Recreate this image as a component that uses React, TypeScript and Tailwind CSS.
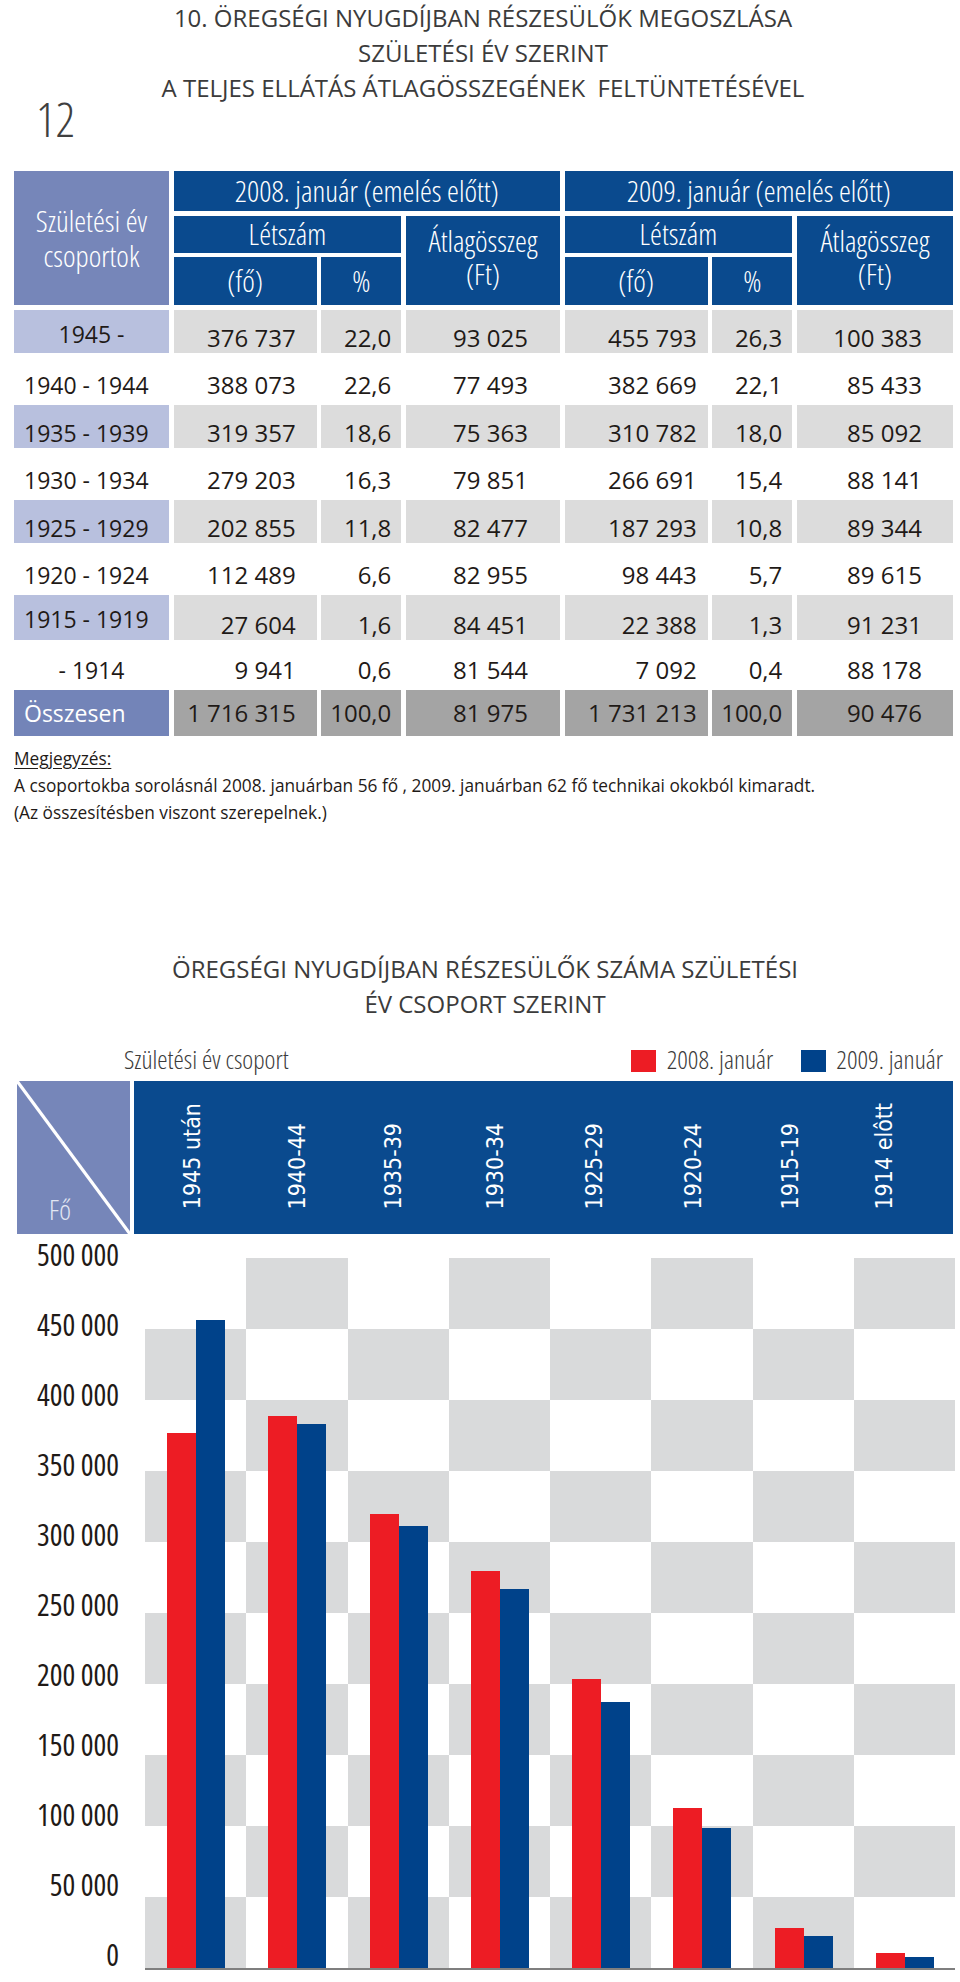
const sans = "font-['Open_Sans',sans-serif]";
const cond = "font-['Open_Sans',sans-serif] font-[350] [font-stretch:condensed]";
const condNormal = "font-['Open_Sans',sans-serif] font-normal [font-stretch:condensed]";

type Row = {
  label: string;
  v: string[];
  shade?: boolean;
  center?: boolean;
  pb?: string;
};

const rows: Row[] = [
  { label: "1945 -", center: true, shade: true, pb: "pb-[4px]", v: ["376 737", "22,0", "93 025", "455 793", "26,3", "100 383"] },
  { label: "1940 - 1944", v: ["388 073", "22,6", "77 493", "382 669", "22,1", "85 433"] },
  { label: "1935 - 1939", shade: true, v: ["319 357", "18,6", "75 363", "310 782", "18,0", "85 092"] },
  { label: "1930 - 1934", v: ["279 203", "16,3", "79 851", "266 691", "15,4", "88 141"] },
  { label: "1925 - 1929", shade: true, v: ["202 855", "11,8", "82 477", "187 293", "10,8", "89 344"] },
  { label: "1920 - 1924", v: ["112 489", "6,6", "82 955", "98 443", "5,7", "89 615"] },
  { label: "1915 - 1919", shade: true, pb: "pb-[6px]", v: ["27 604", "1,6", "84 451", "22 388", "1,3", "91 231"] },
  { label: "- 1914", center: true, v: ["9 941", "0,6", "81 544", "7 092", "0,4", "88 178"] },
];

const total = ["1 716 315", "100,0", "81 975", "1 731 213", "100,0", "90 476"];
const padR = ["pr-[21px]", "pr-[10px]", "pr-[32px]", "pr-[11px]", "pr-[10px]", "pr-[31px]"];

const groups = ["1945 után", "1940-44", "1935-39", "1930-34", "1925-29", "1920-24", "1915-19", "1914 elôtt"];
const y2008 = [376737, 388073, 319357, 279203, 202855, 112489, 27604, 9941];
const y2009 = [455793, 382669, 310782, 266691, 187293, 98443, 22388, 7092];
const ticks = ["500 000", "450 000", "400 000", "350 000", "300 000", "250 000", "200 000", "150 000", "100 000", "50 000", "0"];

const head = `flex items-center justify-center bg-[#0a4a8e] text-[30px] leading-[36px] text-white ${cond}`;

function Table() {
  return (
    <div className="grid grid-cols-[155px_143px_80px_154px_143px_80px_156px] grid-rows-[40px_37px_48px_43px_43px_43px_43px_43px_43px_45px_41px_46px] gap-x-[4.67px] gap-y-[4.5px] pl-[14px] text-[#1f1a17]">
      <div className={`col-start-1 row-start-1 row-span-3 flex flex-col items-center justify-center bg-[#7686b9] text-[30px] text-white ${cond}`}>
        <span className="h-[35px] leading-[35px]">Születési év</span>
        <span className="h-[35px] leading-[35px]">csoportok</span>
      </div>
      {[0, 1].map(g => (
        <div key={g} className="contents">
          <div className={`${g ? "col-start-5" : "col-start-2"} col-span-3 row-start-1 ${head}`}>{g ? "2009" : "2008"}. január (emelés előtt)</div>
          <div className={`${g ? "col-start-5" : "col-start-2"} col-span-2 row-start-2 ${head}`}>Létszám</div>
          <div className={`${g ? "col-start-7" : "col-start-4"} row-start-2 row-span-2 flex-col pb-[7px] ${head}`}>
            <span className="h-[33px] leading-[33px]">Átlagösszeg</span>
            <span className="h-[33px] leading-[33px]">(Ft)</span>
          </div>
          <div className={`${g ? "col-start-5" : "col-start-2"} row-start-3 ${head}`}>(fő)</div>
          <div className={`${g ? "col-start-6" : "col-start-3"} row-start-3 ${head}`}>%</div>
        </div>
      ))}
      {rows.map(r => (
        <div key={r.label} className="contents">
          <div className={`flex items-end text-[23px] leading-[30px] ${sans} ${r.pb ?? ""} ${r.center ? "justify-center" : "pl-[10px]"} ${r.shade ? "bg-[#b8c0de]" : ""}`}>{r.label}</div>
          {r.v.map((v, i) => (
            <div key={i} className={`flex items-end justify-end text-[24px] leading-[30px] ${sans} ${padR[i]} ${r.shade ? "bg-[#dcdcdc]" : ""}`}>{v}</div>
          ))}
        </div>
      ))}
      <div className={`flex items-center bg-[#7384b8] pl-[10px] text-[23px] leading-[30px] text-white ${sans}`}>Összesen</div>
      {total.map((v, i) => (
        <div key={i} className={`flex items-center justify-end bg-[#a4a4a4] text-[24px] leading-[30px] ${sans} ${padR[i]}`}>{v}</div>
      ))}
    </div>
  );
}

function Chart() {
  return (
    <div>
      <div className={`pl-[10px] text-center text-[24px] leading-[35px] text-[#3b3b3b] ${sans}`}>
        <div>ÖREGSÉGI NYUGDÍJBAN RÉSZESÜLŐK SZÁMA SZÜLETÉSI</div>
        <div>ÉV CSOPORT SZERINT</div>
      </div>

      <div className={`mt-[23px] flex items-center justify-between pl-[124px] pr-[17px] text-[26px] leading-[30px] text-[#3b3b3b] ${cond}`}>
        <span>Születési év csoport</span>
        <div className="flex items-center">
          <span className="mt-[4px] h-[22px] w-[25px] bg-[#ed1c24]" />
          <span className="ml-[11px]">2008. január</span>
          <span className="ml-[28px] mt-[4px] h-[22px] w-[25px] bg-[#00428a]" />
          <span className="ml-[10px]">2009. január</span>
        </div>
      </div>

      <div className="mt-[7px] flex h-[153px] gap-[4px] pl-[17px]">
        <div className="relative w-[113px] bg-[#7686b9]">
          <svg className="absolute inset-0 h-full w-full" viewBox="0 0 113 153" preserveAspectRatio="none">
            <line x1="0" y1="0" x2="113" y2="153" stroke="#ffffff" strokeWidth="3.2" />
          </svg>
          <span className={`absolute bottom-[10px] left-[32px] text-[28px] leading-[30px] text-[#e3e7f3] ${cond}`}>Fő</span>
        </div>
        <div className="grid w-[819px] grid-cols-[116px_95px_96px_108px_90px_109px_85px_103px] bg-[#0a4a8e]">
          {groups.map(g => (
            <div key={g} className="flex items-end justify-center pb-[24px]">
              <span className="rotate-180 font-['DejaVu_Sans_Condensed','DejaVu_Sans',sans-serif] text-[23px] leading-none text-white [writing-mode:vertical-rl]">{g}</span>
            </div>
          ))}
        </div>
      </div>

      <div className="flex items-start">
        <div className={`mt-[6px] flex h-[730px] w-[119px] flex-col items-end justify-between text-[30px] leading-[30px] text-[#1f1a17] ${condNormal}`}>
          {ticks.map(t => <span key={t}>{t}</span>)}
        </div>
        <div className="ml-[26px] mt-[24px] w-[810px]">
          <div className="relative h-[710px]">
            <div className="absolute inset-0 grid grid-cols-8 grid-rows-10">
              {Array.from({ length: 80 }, (_, k) => {
                const r = Math.floor(k / 8);
                const c = k % 8;
                return <div key={k} className={(r + c) % 2 ? "bg-[#d9dadb]" : ""} />;
              })}
            </div>
            <div className="relative grid h-full grid-cols-8">
              {y2008.map((v, i) => (
                <div key={i} className="flex items-end pl-[22px]">
                  <div className="w-[29px] bg-[#ed1c24]" style={{ height: (v * 710) / 500000 }} />
                  <div className="w-[29px] bg-[#00428a]" style={{ height: (y2009[i] * 710) / 500000 }} />
                </div>
              ))}
            </div>
          </div>
          <div className="h-[2px] bg-[#7f7f7f]" />
        </div>
      </div>
    </div>
  );
}

export default function App() {
  return (
    <div className="min-h-[1982px] w-[960px] bg-white">
      <div className={`pl-[6px] text-center text-[24px] leading-[35px] text-[#3b3b3b] ${sans}`}>
        <div>10. ÖREGSÉGI NYUGDÍJBAN RÉSZESÜLŐK MEGOSZLÁSA</div>
        <div>SZÜLETÉSI ÉV SZERINT</div>
        <div className="whitespace-pre">A TELJES ELLÁTÁS ÁTLAGÖSSZEGÉNEK  FELTÜNTETÉSÉVEL</div>
      </div>
      <div className={`-mt-[10px] pl-[36px] text-[48px] leading-[48px] text-[#404040] ${cond}`}>12</div>

      <div className="mt-[28px]">
        <Table />
      </div>

      <div className={`mt-[9px] pl-[14px] text-[17.3px] leading-[27px] text-[#1f1a17] ${sans}`}>
        <div className="underline underline-offset-[3px]">Megjegyzés:</div>
        <div>A csoportokba sorolásnál 2008. januárban 56 fő , 2009. januárban 62 fő technikai okokból kimaradt.</div>
        <div>(Az összesítésben viszont szerepelnek.)</div>
      </div>

      <div className="mt-[125px]">
        <Chart />
      </div>
    </div>
  );
}
